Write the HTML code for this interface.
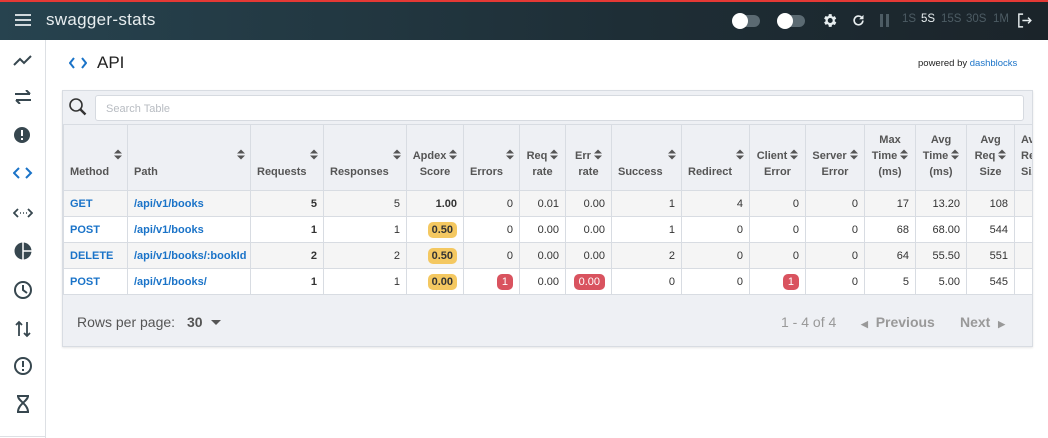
<!DOCTYPE html>
<html><head><style>
*{box-sizing:border-box;margin:0;padding:0}
body{width:1048px;height:438px;overflow:hidden;background:#fff;font-family:"Liberation Sans",sans-serif;position:relative}
.top{position:absolute;left:0;top:0;width:1048px;height:40px;background:linear-gradient(90deg,#27434f,#1e2e36 60%,#1b242a);border-top:2px solid #e53935}
.top .t{position:absolute;left:46px;top:8px;color:#e8eef0;font-size:17px;letter-spacing:.3px}
.side{position:absolute;left:0;top:40px;width:46px;height:398px;border-right:1px solid #dde0e4}
.side svg{position:absolute;left:13px}
.tog{position:absolute;top:13px;width:26px;height:12px;border-radius:6px;background:#5b6a72}
.tog i{position:absolute;left:-2px;top:-2px;width:16px;height:16px;border-radius:50%;background:#fff}
.rt{position:absolute;top:11px;font-size:11.5px;color:#4d5c64}
.panel{position:absolute;left:62px;top:90px;width:971px;height:257px;background:#eef0f4;border:1px solid #d8dce2;box-shadow:0 1px 2px rgba(0,0,0,.1);overflow:hidden}
.search{position:absolute;left:32px;top:4px;width:929px;height:26px;background:#fff;border:1px solid #d6dae0;border-radius:3px;font-size:11px;color:#b8bcc2;padding:7px 10px}
.tw{position:absolute;left:0;top:33px;width:970px;overflow:hidden}
table{border-collapse:collapse;table-layout:fixed;width:1000px}
th,td{border:1px solid #d8dce2;font-size:11px;color:#333}
th{height:66px;background:#eef0f4;color:#555;font-weight:bold;vertical-align:bottom;padding:0 4px 10px;text-align:right;line-height:16px;position:relative;white-space:nowrap}
th.lt{padding-left:6px}
td{height:26px;padding:0 6px;text-align:right}
tr.a td{background:#f5f5f5}tr.b td{background:#fff}
td.l{text-align:left;color:#1a73c8;font-weight:bold}
.sv{display:inline-block;margin-left:3px;vertical-align:-1px}
.sa{position:absolute;right:5px;top:24px}
.y{background:#f4c861;border-radius:5px;padding:2px 4px;font-weight:bold}
.r{background:#d9535f;color:#fff;border-radius:5px;padding:2px 5px}
.foot{position:absolute;left:0;top:204px;width:970px;height:52px;font-size:14px;color:#555}
</style></head><body>
<svg width="0" height="0" style="position:absolute"><defs><symbol id="so" viewBox="0 0 8 11"><path d="M0 4.5L4 0.5 8 4.5zM0 6.5L4 10.5 8 6.5z" fill="#555"/></symbol></defs></svg>
<div class="top">
<svg style="position:absolute;left:15px;top:12px" width="16" height="12"><path d="M0 1h16M0 6h16M0 11h16" stroke="#e8eef0" stroke-width="1.8"/></svg>
<div class="t">swagger-stats</div>
<div class="tog" style="left:734px"><i></i></div>
<div class="tog" style="left:779px"><i></i></div>
<svg style="position:absolute;left:821px;top:10px" width="17" height="17" viewBox="0 0 24 24"><path fill="#e8eef0" d="M19.4 13a7.5 7.5 0 000-2l2.1-1.6-2-3.5-2.5 1a7 7 0 00-1.700-1L15 3h-4l-.4 2.6a7 7 0 00-1.7 1l-2.5-1-2 3.5L6.5 11a7.5 7.5 0 000 2l-2.1 1.6 2 3.5 2.5-1a7 7 0 001.7 1L11 21h4l.4-2.6a7 7 0 001.7-1l2.5 1 2-3.5zM13 15.5a3.5 3.5 0 110-7 3.5 3.5 0 010 7z"/></svg>
<svg style="position:absolute;left:851px;top:11px" width="15" height="15" viewBox="0 0 24 24"><path fill="none" stroke="#e8eef0" stroke-width="2.6" d="M19 12a7 7 0 11-2-5"/><path fill="#e8eef0" d="M20 3v7h-7z"/></svg>
<div style="position:absolute;left:880px;top:12px;width:3px;height:13px;background:#4d5c64"></div><div style="position:absolute;left:886px;top:12px;width:3px;height:13px;background:#4d5c64"></div>
<span class="rt" style="left:902px">1S</span><span class="rt" style="left:921px;color:#e8eef0">5S</span><span class="rt" style="left:941px">15S</span><span class="rt" style="left:966px">30S</span><span class="rt" style="left:993px">1M</span>
<svg style="position:absolute;left:1016px;top:10px" width="17" height="17" viewBox="0 0 24 24"><path fill="none" stroke="#e8eef0" stroke-width="2" d="M10 3H4v18h6M9 12h12M17 8l4 4-4 4"/></svg>
</div>
<div class="side">
<svg style="top:13px" width="20" height="14" viewBox="0 0 20 14"><path d="M1 12l6-6 4 4 7-7" fill="none" stroke="#37474f" stroke-width="2"/></svg>
<svg style="top:50px" width="20" height="14"><path d="M2 4h15M13 0l4 4M18 10H3M7 14l-4-4" fill="none" stroke="#37474f" stroke-width="2"/></svg>
<svg style="top:86px" width="20" height="20"><circle cx="9" cy="9" r="8" fill="#37474f"/><path d="M9 4v6M9 12v2" stroke="#fff" stroke-width="2"/></svg>
<svg style="top:126px" width="20" height="14"><path d="M6 2L1 7l5 5M13 2l5 5-5 5" fill="none" stroke="#1a73c8" stroke-width="2"/></svg>
<svg style="top:166px" width="20" height="14"><path d="M5 3L1 7l4 4M15 3l4 4-4 4" fill="none" stroke="#37474f" stroke-width="1.8"/><path d="M7 7h1M10 7h1M13 7h1" stroke="#37474f" stroke-width="1.6"/></svg>
<svg style="top:201px" width="20" height="20"><circle cx="10" cy="10" r="8.5" fill="#37474f"/><path d="M10 1v18M10 10h9" stroke="#fff" stroke-width="1.5"/></svg>
<svg style="top:240px" width="20" height="20"><circle cx="10" cy="10" r="8" fill="none" stroke="#37474f" stroke-width="2"/><path d="M10 5v5l4 3" fill="none" stroke="#37474f" stroke-width="2"/></svg>
<svg style="top:280px" width="20" height="18"><path d="M6 16V2M3 5l3-3 3 3M14 2v14M11 13l3 3 3-3" fill="none" stroke="#37474f" stroke-width="1.8"/></svg>
<svg style="top:316px" width="20" height="20"><circle cx="10" cy="10" r="8" fill="none" stroke="#37474f" stroke-width="2"/><path d="M10 5v6M10 13v2" stroke="#37474f" stroke-width="2"/></svg>
<svg style="top:354px" width="20" height="20"><path d="M4 2h12M4 18h12M5 2c0 5 10 8 10 16M15 2c0 5-10 8-10 16" fill="none" stroke="#37474f" stroke-width="2"/></svg>
<div style="position:absolute;left:0;top:396px;width:46px;border-top:1px solid #dde0e4"></div>
</div>
<svg style="position:absolute;left:69px;top:57px" width="18" height="12"><path d="M5 1L1 6l4 5M13 1l4 5-4 5" fill="none" stroke="#1a73c8" stroke-width="2"/></svg>
<div style="position:absolute;left:97px;top:53px;font-size:17px;color:#222">API</div>
<div style="position:absolute;left:918px;top:58px;font-size:9.5px;color:#222">powered by <span style="color:#1a73c8">dashblocks</span></div>
<div class="panel">
<svg style="position:absolute;left:5px;top:6px" width="20" height="20"><circle cx="8" cy="8" r="6" fill="none" stroke="#333" stroke-width="1.6"/><path d="M12.5 12.5l5 5" stroke="#333" stroke-width="2.4"/></svg>
<div class="search">Search Table</div>
<div class="tw"><table>
<colgroup><col style="width:64px"><col style="width:123px"><col style="width:73px"><col style="width:83px"><col style="width:57px"><col style="width:56px"><col style="width:46px"><col style="width:46px"><col style="width:70px"><col style="width:68px"><col style="width:56px"><col style="width:59px"><col style="width:51px"><col style="width:51px"><col style="width:48px"><col style="width:49px"></colgroup>
<tr>
<th class="lt" style="text-align:left">Method<svg class="sa" width="8" height="11"><use href="#so"/></svg></th>
<th class="lt" style="text-align:left">Path<svg class="sa" width="8" height="11"><use href="#so"/></svg></th>
<th class="lt" style="text-align:left">Requests<svg class="sa" width="8" height="11"><use href="#so"/></svg></th>
<th class="lt" style="text-align:left">Responses<svg class="sa" width="8" height="11"><use href="#so"/></svg></th>
<th style="text-align:center">Apdex<svg class="sv" width="8" height="11"><use href="#so"/></svg><br>Score</th>
<th class="lt" style="text-align:left">Errors<svg class="sa" width="8" height="11"><use href="#so"/></svg></th>
<th style="text-align:center">Req<svg class="sv" width="8" height="11"><use href="#so"/></svg><br>rate</th>
<th style="text-align:center">Err<svg class="sv" width="8" height="11"><use href="#so"/></svg><br>rate</th>
<th class="lt" style="text-align:left">Success<svg class="sa" width="8" height="11"><use href="#so"/></svg></th>
<th class="lt" style="text-align:left">Redirect<svg class="sa" width="8" height="11"><use href="#so"/></svg></th>
<th style="text-align:center">Client<svg class="sv" width="8" height="11"><use href="#so"/></svg><br>Error</th>
<th style="text-align:center">Server<svg class="sv" width="8" height="11"><use href="#so"/></svg><br>Error</th>
<th style="text-align:center">Max<br>Time<svg class="sv" width="8" height="11"><use href="#so"/></svg><br>(ms)</th>
<th style="text-align:center">Avg<br>Time<svg class="sv" width="8" height="11"><use href="#so"/></svg><br>(ms)</th>
<th style="text-align:center">Avg<br>Req<svg class="sv" width="8" height="11"><use href="#so"/></svg><br>Size</th>
<th class="lt" style="text-align:left">Avg<br>Res<br>Size</th>
</tr>
<tr class="a"><td class="l">GET</td><td class="l">/api/v1/books</td><td><b>5</b></td><td>5</td><td><b>1.00</b></td><td>0</td><td>0.01</td><td>0.00</td><td>1</td><td>4</td><td>0</td><td>0</td><td>17</td><td>13.20</td><td>108</td><td></td></tr>
<tr class="b"><td class="l">POST</td><td class="l">/api/v1/books</td><td><b>1</b></td><td>1</td><td><span class="y">0.50</span></td><td>0</td><td>0.00</td><td>0.00</td><td>1</td><td>0</td><td>0</td><td>0</td><td>68</td><td>68.00</td><td>544</td><td></td></tr>
<tr class="a"><td class="l">DELETE</td><td class="l">/api/v1/books/:bookId</td><td><b>2</b></td><td>2</td><td><span class="y">0.50</span></td><td>0</td><td>0.00</td><td>0.00</td><td>2</td><td>0</td><td>0</td><td>0</td><td>64</td><td>55.50</td><td>551</td><td></td></tr>
<tr class="b"><td class="l">POST</td><td class="l">/api/v1/books/</td><td><b>1</b></td><td>1</td><td><span class="y">0.00</span></td><td><span class="r">1</span></td><td>0.00</td><td><span class="r">0.00</span></td><td>0</td><td>0</td><td><span class="r">1</span></td><td>0</td><td>5</td><td>5.00</td><td>545</td><td></td></tr>
</table></div>
<div class="foot">
<span style="position:absolute;left:14px;top:19px">Rows per page:</span>
<span style="position:absolute;left:124px;top:19px;font-weight:bold">30</span>
<svg style="position:absolute;left:148px;top:25px" width="10" height="6"><path d="M0 0h10L5 5z" fill="#555"/></svg>
<span style="position:absolute;left:718px;top:19px;color:#999">1 - 4 of 4</span>
<span style="position:absolute;left:798px;top:19px;color:#999;font-weight:bold"><span style="font-size:9px">◀</span>&nbsp; Previous</span>
<span style="position:absolute;left:897px;top:19px;color:#999;font-weight:bold">Next &nbsp;<span style="font-size:9px">▶</span></span>
</div>
</div>
</body></html>
